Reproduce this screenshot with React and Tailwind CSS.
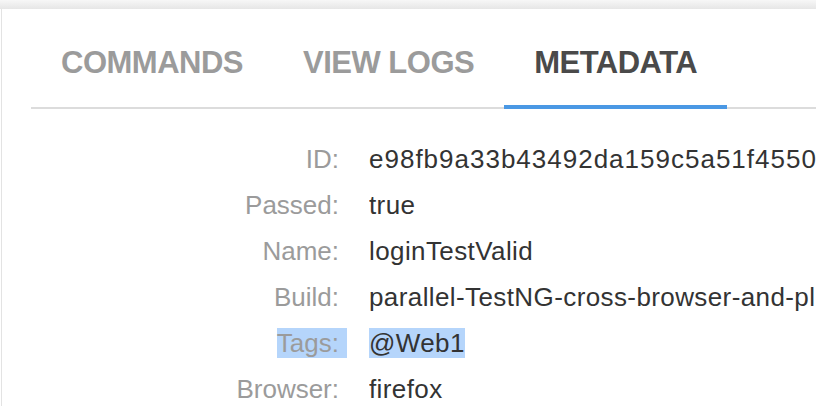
const tabs = [
  { label: "COMMANDS", active: false },
  { label: "VIEW LOGS", active: false },
  { label: "METADATA", active: true },
];

const rows = [
  { label: "ID:", value: "e98fb9a33b43492da159c5a51f4550", wide: true },
  { label: "Passed:", value: "true" },
  { label: "Name:", value: "loginTestValid" },
  { label: "Build:", value: "parallel-TestNG-cross-browser-and-platform" },
  { label: "Tags:", value: "@Web1", selected: true },
  { label: "Browser:", value: "firefox" },
];

export default function App() {
  return (
    <div className="flex h-[406px] w-[816px] flex-col overflow-hidden bg-white font-['Liberation_Sans',Arial,sans-serif]">
      <div className="h-[9px] shrink-0 bg-gradient-to-b from-[#f7f7f7] to-[#e6e6e6]" />
      <div className="ml-[1px] flex-1 border-l border-[#e3e3e3] bg-white">
        <div className="ml-[29px] mt-[34px] flex border-b-2 border-[#dcdcdc]">
          {tabs.map((t) => (
            <div
              key={t.label}
              className={
                t.active
                  ? "-mb-[2px] border-b-4 border-[#4a98e4] px-[30px] pb-[22px] text-[31px] font-bold leading-[40px] tracking-[-0.5px] text-[#4a4a4a]"
                  : "px-[30px] pb-[22px] text-[31px] font-bold leading-[40px] tracking-[-0.5px] text-[#9b9b9b]"
              }
            >
              {t.label}
            </div>
          ))}
        </div>

        <div className="mt-[27px] flex flex-col">
          {rows.map((r) => (
            <div key={r.label} className="flex h-[46px] items-center text-[26px] leading-[46px]">
              <div className="w-[345px] shrink-0 text-right">
                <span className={r.selected ? "bg-[#b5d5fb] pr-[8px] text-[#9b9b9b]" : "pr-[8px] text-[#9b9b9b]"}>
                  {r.label}
                </span>
              </div>
              <div className="ml-[22px] overflow-hidden whitespace-nowrap text-[#333333]">
                <span
                  className={
                    (r.selected ? "bg-[#b5d5fb] " : "") + (r.wide ? "tracking-[1px]" : "tracking-[0.4px]")
                  }
                >
                  {r.value}
                </span>
              </div>
            </div>
          ))}
        </div>
      </div>
    </div>
  );
}
